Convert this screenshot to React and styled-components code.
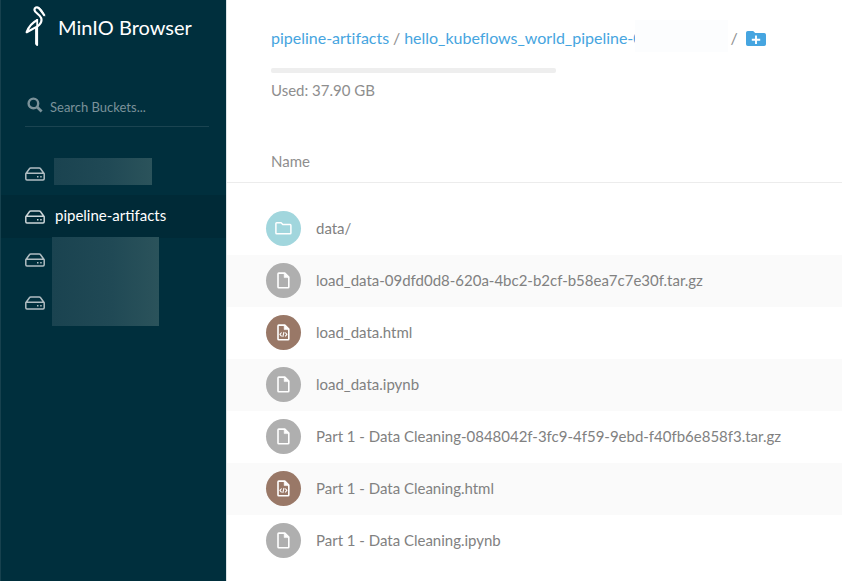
import React from "react";
import styled, { createGlobalStyle } from "styled-components";

const GlobalStyle = createGlobalStyle`
  *, *::before, *::after { box-sizing: border-box; }
  body { margin: 0; background: #fff; font-family: Lato, sans-serif; font-size: 15px; color: #8e8e8e; overflow: hidden; }
`;

const Page = styled.div`
  display: flex;
  width: 842px;
  height: 581px;
`;

const Sidebar = styled.aside`
  width: 226px;
  flex: none;
  background: #002f3d;
  border-left: 1px solid #17414e;
`;

const Brand = styled.header`
  display: flex;
  height: 56px;
  padding: 6px 0 0 24px;
  gap: 12px;
  svg { width: 21px; height: 41px; flex: none; }
`;

const BrandName = styled.h1`
  margin: 0;
  font-size: 20px;
  font-weight: 400;
  line-height: 42px;
  color: #fff;
  white-space: nowrap;
`;

const Search = styled.div`
  display: flex;
  align-items: center;
  height: 41px;
  margin: 30px 17px 0 24px;
  padding: 2px 0 0 2px;
  border-bottom: 1px solid #1b4451;
  color: #7b929a;
  font-size: 13px;
  svg { width: 16px; height: 16px; margin: -4px 7px 0 0; flex: none; }
`;

const BucketList = styled.nav`
  margin-top: 25px;
`;

const Bucket = styled.div`
  display: flex;
  align-items: center;
  height: 43px;
  padding: 0 0 1px 24px;
  gap: 10px;
  font-size: 15px;
  color: ${(p) => (p.$active ? "#fff" : "#b0bdc2")};
  background: ${(p) => (p.$active ? "#002a37" : "transparent")};
  svg { width: 20px; height: 14px; margin-top: 1px; flex: none; color: ${(p) => (p.$active ? "#ccd5d8" : "#b0bdc2")}; }
`;

const BucketName = styled.span`
  line-height: 18px;
  margin-top: -2px;
`;

const BucketGroup = styled.div`
  display: flex;
  align-items: flex-start;
`;

const GroupItems = styled.div`
  width: 51px;
`;

const Mask = styled.div`
  width: ${(p) => p.$w}px;
  height: ${(p) => p.$h}px;
  margin-left: ${(p) => p.$ml || 0}px;
  margin-top: ${(p) => p.$mt || 0}px;
  background: linear-gradient(90deg, #1a4350, #204955 55%, #2b535b);
`;

const Main = styled.main`
  flex: 1;
  min-width: 0;
  border-left: 1px solid #dce3e6;
`;

const Toolbar = styled.header`
  height: 183px;
  padding: 20px 0 0 44px;
  border-bottom: 1px solid #ececec;
`;

const Crumbs = styled.div`
  display: flex;
  align-items: center;
  height: 32px;
  padding-top: 3px;
  white-space: pre;
  font-size: 16px;
  svg { width: 20px; height: 15px; margin: 1px 0 0 5px; }
`;

const Crumb = styled.span`
  color: #46a5e0;
  flex: none;
  letter-spacing: -0.01px;
`;

const Slash = styled.span`
  width: ${(p) => p.$w}px;
  text-align: center;
  flex: none;
`;

const CrumbMask = styled.span`
  width: 93px;
  height: 32px;
  margin: -3px 0 0 -8px;
  position: relative;
  background: #fcfdfe;
`;

const UsageTrack = styled.div`
  width: 285px;
  height: 5px;
  margin-top: 16px;
  border-radius: 2px;
  background: #eee;
`;

const Usage = styled.div`
  margin-top: 8px;
  line-height: 18px;
`;

const ColumnTitle = styled.div`
  margin-top: 53px;
  line-height: 18px;
`;

const FileList = styled.div`
  padding-top: 20px;
`;

const FileRow = styled.div`
  display: flex;
  align-items: center;
  height: 52px;
  padding: 0 0 1px 39px;
  gap: 15px;
  color: #818181;
  white-space: nowrap;
  letter-spacing: -0.01px;
  &:nth-child(even) { background: #fafafa; }
`;

const FileName = styled.span`
  line-height: 17px;
`;

const tints = { folder: "#a1d6dd", file: "#afafaf", code: "#997867" };

const FileBadge = styled.span`
  display: flex;
  align-items: center;
  justify-content: center;
  width: 35px;
  height: 35px;
  flex: none;
  border-radius: 50%;
  background: ${(p) => tints[p.$kind]};
  svg { width: 17px; height: 17px; }
`;

const Stork = () => (
  <svg viewBox="0 0 21 41" fill="none" stroke="#fff" strokeLinejoin="round">
    <path d="M19.6 9.8C17.8 6.7 16 4.1 13.8 2.2C12 .4 9.2 1.7 9.5 4.1C9.7 6.8 14.8 8.4 16.1 11.8C17.3 15.2 15 18.5 12.4 20.4L1.7 26.2C3.4 21.2 7 16.6 12.4 13.9" strokeWidth="2.2" />
    <path d="M12.2 13V39L11 37.8V21.2" strokeWidth="1.8" />
    <path d="M13.5 1.3C16 2.2 18.5 6.5 19.8 10.3L16.2 6.4Z" fill="#fff" strokeWidth=".4" />
  </svg>
);

const SearchIcon = () => (
  <svg viewBox="0 0 16 16" fill="none" stroke="currentColor">
    <circle cx="6.4" cy="6.4" r="4.8" strokeWidth="2.4" />
    <path d="M10.1 10.1L14.6 14.6" strokeWidth="2.8" />
  </svg>
);

const Drive = () => (
  <svg viewBox="0 0 20 14" fill="none" stroke="currentColor" strokeWidth="1.5" strokeLinejoin="round">
    <path d="M.8 6.8L4.6 1.5Q5 .9 5.8 .9H14.2Q15 .9 15.4 1.5L19.2 6.8V11.8Q19.2 13 18 13H2Q.8 13 .8 11.8ZM1 6.3H19" />
    <path d="M12 9.7H13.5M15.2 9.7H16.7" />
  </svg>
);

const FolderPlus = () => (
  <svg viewBox="0 0 20 15">
    <path d="M1.8 0H7.2L9.2 2H18.2Q20 2 20 3.8V13.2Q20 15 18.2 15H1.8Q0 15 0 13.2V1.8Q0 0 1.8 0Z" fill="#46a5e0" />
    <path d="M10 4.4V13M5.8 8.7H14.2" stroke="#fff" strokeWidth="1.9" />
  </svg>
);

const FileGlyph = ({ kind }) =>
  kind === "folder" ? (
    <svg viewBox="0 0 17 17" fill="none" stroke="#fff" strokeWidth="1.5" strokeLinejoin="round">
      <path d="M1.7 2.8H6.1L7.8 4.6H15.1Q15.9 4.6 15.9 5.4V13Q15.9 13.8 15.1 13.8H1.7Q.9 13.8 .9 13V3.6Q.9 2.8 1.7 2.8Z" />
    </svg>
  ) : (
    <svg viewBox="0 0 17 17" fill="none" stroke="#fff" strokeWidth="1.6" strokeLinejoin="round">
      <path d="M3.8 1.1H9.8L13.8 5.1V14.9Q13.8 15.7 13 15.7H3.8Q3 15.7 3 14.9V1.9Q3 1.1 3.8 1.1Z" />
      <path d="M9.2 1.3V5.6H13.5Z" fill="#fff" strokeWidth=".6" />
      {kind === "code" && <path d="M6.6 8.5L4.9 10.4L6.6 12.3M10.2 8.5L11.9 10.4L10.2 12.3M9 8L7.8 12.8" strokeWidth="1.1" />}
    </svg>
  );

const files = [
  ["folder", "data/"],
  ["file", "load_data-09dfd0d8-620a-4bc2-b2cf-b58ea7c7e30f.tar.gz"],
  ["code", "load_data.html"],
  ["file", "load_data.ipynb"],
  ["file", "Part 1 - Data Cleaning-0848042f-3fc9-4f59-9ebd-f40fb6e858f3.tar.gz"],
  ["code", "Part 1 - Data Cleaning.html"],
  ["file", "Part 1 - Data Cleaning.ipynb"],
];

export default function App() {
  return (
    <Page>
      <GlobalStyle />
      <Sidebar>
        <Brand>
          <Stork />
          <BrandName>MinIO Browser</BrandName>
        </Brand>
        <Search>
          <SearchIcon />
          Search Buckets...
        </Search>
        <BucketList>
          <Bucket><Drive /><Mask $w={98} $h={27} $ml={-1} $mt={-4} /></Bucket>
          <Bucket $active><Drive /><BucketName>pipeline-artifacts</BucketName></Bucket>
          <BucketGroup>
            <GroupItems>
              <Bucket><Drive /></Bucket>
              <Bucket><Drive /></Bucket>
            </GroupItems>
            <Mask $w={107} $h={89} $mt={-1} />
          </BucketGroup>
        </BucketList>
      </Sidebar>
      <Main>
        <Toolbar>
          <Crumbs>
            <Crumb>pipeline-artifacts</Crumb>
            <Slash $w={15}>/</Slash>
            <Crumb>hello_kubeflows_world_pipeline-0</Crumb>
            <CrumbMask />
            <Slash $w={13}>/</Slash>
            <FolderPlus />
          </Crumbs>
          <UsageTrack />
          <Usage>Used: 37.90 GB</Usage>
          <ColumnTitle>Name</ColumnTitle>
        </Toolbar>
        <FileList>
          {files.map(([kind, name]) => (
            <FileRow key={name}>
              <FileBadge $kind={kind}><FileGlyph kind={kind} /></FileBadge>
              <FileName>{name}</FileName>
            </FileRow>
          ))}
        </FileList>
      </Main>
    </Page>
  );
}
